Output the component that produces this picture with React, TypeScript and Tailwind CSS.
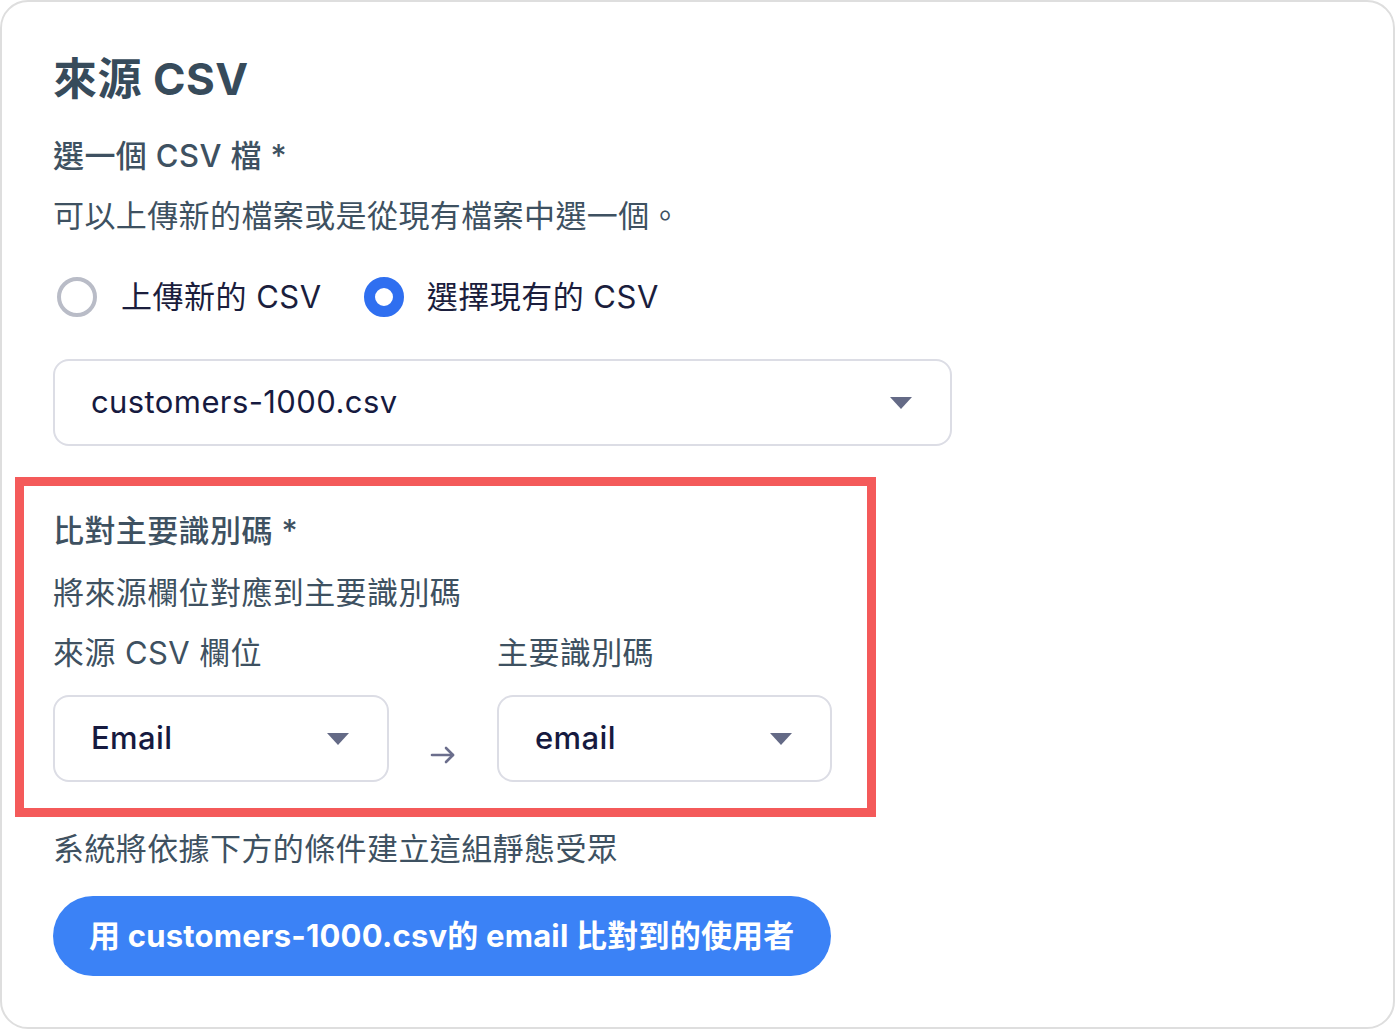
import React from "react";

const Caret = () => (
  <svg width="22" height="12" viewBox="0 0 22 12" className="shrink-0">
    <path d="M0 0 L22 0 L11 12 Z" fill="#646a86" />
  </svg>
);

const Select = ({ value, className }: { value: string; className: string }) => (
  <div
    className={
      "flex h-[87px] items-center justify-between rounded-[16px] border-2 border-[#dcdde5] bg-white pl-[36px] pr-[38px] text-[31px] tracking-[0.4px] text-[#161a3f] " +
      className
    }
  >
    <span>{value}</span>
    <Caret />
  </div>
);

export default function App() {
  return (
    <div
      className="h-[1029px] w-[1395px] bg-white"
      style={{ fontFamily: 'Inter, "Noto Sans CJK TC", sans-serif' }}
    >
      <div className="h-[1029px] w-[1395px] rounded-[28px] border-2 border-[#dedede] bg-white pl-[51px] pt-[49px]">
        <h1 className="text-[44px] font-bold leading-[56px] tracking-[0.5px] text-[#374b5b]">來源 CSV</h1>
        <div className="mt-[27px] text-[31px] font-medium leading-[44px] tracking-[0.4px] text-[#3e5161]">選一個 CSV 檔 *</div>
        <div className="mt-[16px] text-[31px] leading-[44px] tracking-[0.4px] text-[#3e5161]">可以上傳新的檔案或是從現有檔案中選一個。</div>

        <div className="mt-[37px] flex h-[44px] items-center text-[31px] tracking-[0.5px] text-[#1b1e3d]">
          <span className="ml-[4px] h-[40px] w-[40px] rounded-full border-[4px] border-[#b9bcc7] bg-white" />
          <span className="ml-[24px]">上傳新的 CSV</span>
          <span className="ml-[42px] h-[40px] w-[40px] rounded-full border-[11px] border-[#2f6ff0] bg-white" />
          <span className="ml-[23px]">選擇現有的 CSV</span>
        </div>

        <Select value="customers-1000.csv" className="mt-[40px] w-[899px]" />

        <div className="relative mt-[63px]">
          <div className="pointer-events-none absolute left-[-38px] top-[-32px] h-[340px] w-[861px] border-[9px] border-[#f45a5a]" />
          <div className="text-[31px] font-medium leading-[44px] tracking-[0.4px] text-[#3e5161]">比對主要識別碼 *</div>
          <div className="mt-[18px] text-[31px] leading-[44px] tracking-[0.4px] text-[#3e5161]">將來源欄位對應到主要識別碼</div>
          <div className="mt-[16px] flex text-[31px] leading-[44px] tracking-[0.4px] text-[#3e5161]">
            <div className="w-[444px]">來源 CSV 欄位</div>
            <div>主要識別碼</div>
          </div>
          <div className="mt-[20px] flex items-center">
            <Select value="Email" className="w-[336px] font-medium" />
            <div className="flex w-[108px] justify-center pt-[32px]">
              <svg width="26" height="18" viewBox="0 0 26 18" fill="none" stroke="#6b6e8c" strokeWidth="2.6" strokeLinecap="round" strokeLinejoin="round">
                <path d="M2 9 H23" />
                <path d="M16 2 L23 9 L16 16" />
              </svg>
            </div>
            <Select value="email" className="w-[335px] font-medium" />
          </div>
        </div>

        <div className="mt-[45px] text-[31px] leading-[44px] tracking-[0.4px] text-[#3e5161]">系統將依據下方的條件建立這組靜態受眾</div>
        <div className="mt-[25px] flex">
          <div className="flex h-[80px] items-center rounded-full bg-[#3b82f6] px-[36px] text-[31px] font-bold tracking-[0.2px] text-white">
            用 customers-1000.csv的 email 比對到的使用者
          </div>
        </div>
      </div>
    </div>
  );
}
